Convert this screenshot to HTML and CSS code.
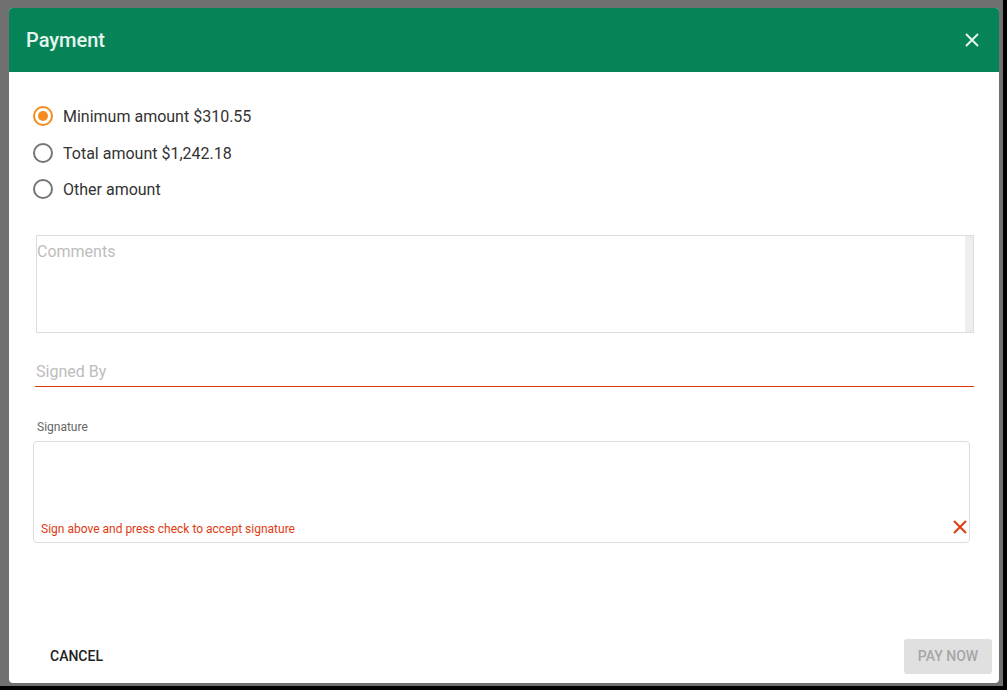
FILE: index.html
```html
<!DOCTYPE html>
<html lang="en">
<head>
<meta charset="utf-8">
<title>Payment</title>
<link rel="stylesheet" href="styles.css">
</head>
<body>
<div class="frame">
  <div class="dialog">
    <header class="dialog-header">
      <h1 class="dialog-title">Payment</h1>
      <button class="close-btn" aria-label="Close">
        <svg width="14" height="14" viewBox="0 0 14 14"><path d="M1 1L13 13M13 1L1 13" stroke="#e6f4ee" stroke-width="2" fill="none"/></svg>
      </button>
    </header>
    <main class="dialog-body">
      <div class="radio-group">
        <label class="radio-row"><span class="radio checked"></span><span class="radio-label">Minimum amount $310.55</span></label>
        <label class="radio-row mid"><span class="radio"></span><span class="radio-label">Total amount $1,242.18</span></label>
        <label class="radio-row"><span class="radio"></span><span class="radio-label">Other amount</span></label>
      </div>
      <div class="comments">
        <span class="placeholder comments-ph">Comments</span>
        <span class="scroll-track"></span>
      </div>
      <div class="signed-by">
        <span class="placeholder">Signed By</span>
      </div>
      <div class="sig-label">Signature</div>
      <div class="sig-box">
        <span class="sig-hint">Sign above and press check to accept signature</span>
        <svg class="sig-x" width="14" height="14" viewBox="0 0 14 14"><path d="M1 1L13 13M13 1L1 13" stroke="#e03a12" stroke-width="2" fill="none"/></svg>
      </div>
    </main>
    <footer class="dialog-footer">
      <button class="btn-cancel">CANCEL</button>
      <button class="btn-pay">PAY NOW</button>
    </footer>
  </div>
</div>
</body>
</html>
```
FILE: styles.css
```css
html, body {
  margin: 0;
  padding: 0;
}
body {
  background: #000;
  width: 1007px;
  height: 690px;
  overflow: hidden;
  font-family: Roboto, "Liberation Sans", Arial, sans-serif;
}
.frame {
  width: 1003px;
  height: 686px;
  background: #707070;
  padding: 8px 0 0 9px;
  box-sizing: border-box;
}
.dialog {
  width: 990px;
  height: 675px;
  background: #fff;
  border-radius: 4px;
  overflow: hidden;
  display: flex;
  flex-direction: column;
}
.dialog-header {
  height: 64px;
  flex: none;
  background: #068457;
  display: flex;
  align-items: center;
  justify-content: space-between;
  padding: 0 20px 0 17px;
}
.dialog-title {
  margin: 0;
  font-size: 20px;
  font-weight: 500;
  color: #e6f4ee;
}
.close-btn {
  border: 0;
  background: none;
  padding: 0;
  width: 14px;
  height: 14px;
  display: flex;
}
.dialog-body {
  padding: 26px 0 0 24px;
  display: flex;
  flex-direction: column;
}
.radio-group {
  display: flex;
  flex-direction: column;
}
.radio-row {
  height: 36px;
  display: flex;
  align-items: center;
  gap: 10px;
}
.radio-row.mid {
  height: 37px;
  padding-top: 1px;
  box-sizing: border-box;
}
.radio {
  width: 20px;
  height: 20px;
  box-sizing: border-box;
  border: 2px solid #757575;
  border-radius: 50%;
  display: flex;
  align-items: center;
  justify-content: center;
}
.radio.checked {
  border-color: #f68b1f;
}
.radio.checked::after {
  content: "";
  width: 10px;
  height: 10px;
  border-radius: 50%;
  background: #f68b1f;
}
.radio-label {
  font-size: 16px;
  color: #333;
}
.comments {
  margin: 28px 0 0 3px;
  width: 938px;
  height: 98px;
  box-sizing: border-box;
  border: 1px solid #ddd;
  display: flex;
  justify-content: space-between;
}
.placeholder {
  font-size: 16px;
  color: #bdbdbd;
}
.comments-ph {
  line-height: 32px;
}
.scroll-track {
  width: 8px;
  background: #eee;
}
.signed-by {
  margin: 22px 0 0 2px;
  width: 939px;
  height: 32px;
  box-sizing: border-box;
  border-bottom: 1px solid #e2380e;
  display: flex;
  align-items: center;
  padding: 1px 0 0 1px;
}
.sig-label {
  margin: 33px 0 0 4px;
  font-size: 12px;
  line-height: 14px;
  color: #666;
}
.sig-box {
  margin-top: 7px;
  width: 937px;
  height: 102px;
  box-sizing: border-box;
  border: 1px solid #ddd;
  border-radius: 4px;
  display: flex;
  align-items: flex-end;
  justify-content: space-between;
  padding: 0 2px 7px 7px;
}
.sig-hint {
  font-size: 12px;
  line-height: 14px;
  color: #e03a12;
  margin-bottom: -1px;
}
.sig-x {
  margin-bottom: 1px;
}
.dialog-footer {
  margin-top: auto;
  display: flex;
  align-items: center;
  justify-content: space-between;
  padding: 0 7px 9px 25px;
}
.btn-cancel {
  border: 0;
  background: none;
  font-family: inherit;
  font-size: 14px;
  font-weight: 500;
  color: #222;
  padding: 0 16px 2px;
  height: 35px;
}
.btn-pay {
  border: 0;
  background: #e0e0e0;
  border-radius: 3px;
  font-family: inherit;
  font-size: 14px;
  font-weight: 500;
  color: #a6a6a6;
  width: 88px;
  height: 35px;
  padding: 0 0 2px;
}
```
